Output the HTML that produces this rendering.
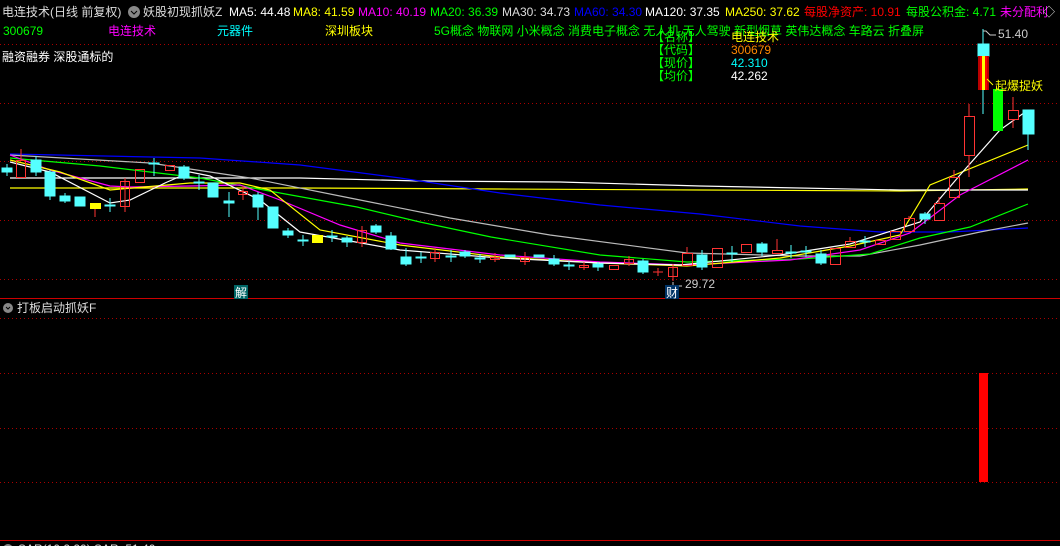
<!DOCTYPE html>
<html><head><meta charset="utf-8"><style>
html,body{margin:0;padding:0;background:#000;width:1060px;height:546px;overflow:hidden}
svg{display:block}
text{font-family:"Liberation Sans","Noto Sans CJK SC",sans-serif;font-size:12px}
</style></head><body>
<svg width="1060" height="546" viewBox="0 0 1060 546" xmlns="http://www.w3.org/2000/svg">
<rect width="1060" height="546" fill="#000"/>
<g stroke="#a00" stroke-dasharray="1,3" stroke-width="1">
<line x1="0" y1="44.5" x2="1060" y2="44.5"/><line x1="0" y1="103.5" x2="1060" y2="103.5"/>
<line x1="0" y1="161.5" x2="1060" y2="161.5"/><line x1="0" y1="220.5" x2="1060" y2="220.5"/>
<line x1="0" y1="279.5" x2="1060" y2="279.5"/>
<line x1="0" y1="318.5" x2="1060" y2="318.5"/><line x1="0" y1="373.5" x2="1060" y2="373.5"/>
<line x1="0" y1="428.5" x2="1060" y2="428.5"/><line x1="0" y1="482.5" x2="1060" y2="482.5"/>
</g>
<line x1="0" y1="298.5" x2="1060" y2="298.5" stroke="#c00"/>
<line x1="0" y1="540.5" x2="1060" y2="540.5" stroke="#c00"/>
<!-- header -->
<text x="2" y="16" fill="#ddd">电连技术(日线 前复权)</text>
<circle cx="134" cy="12" r="6" fill="#888"/><path d="M131 11l3 3 3-3" stroke="#000" fill="none"/>
<text x="143" y="16" fill="#ddd">妖股初现抓妖Z</text>
<text x="229" y="16" fill="#fff">MA5: 44.48</text>
<text x="293" y="16" fill="#ff0">MA8: 41.59</text>
<text x="358" y="16" fill="#f0f">MA10: 40.19</text>
<text x="430" y="16" fill="#0f0">MA20: 36.39</text>
<text x="502" y="16" fill="#ddd">MA30: 34.73</text>
<text x="574" y="16" fill="#00f">MA60: 34.30</text>
<text x="645" y="16" fill="#fff">MA120: 37.35</text>
<text x="725" y="16" fill="#ff0">MA250: 37.62</text>
<text x="804" y="16" fill="#f00">每股净资产: 10.91</text>
<text x="906" y="16" fill="#0f0">每股公积金: 4.71</text>
<text x="1000" y="16" fill="#f0f">未分配利</text>
<text x="1043" y="16" fill="#ddd">◇</text>
<text x="3" y="35" fill="#0f0">300679</text>
<text x="108" y="35" fill="#f0f">电连技术</text>
<text x="217" y="35" fill="#0ff">元器件</text>
<text x="325" y="35" fill="#ff0">深圳板块</text>
<text x="434" y="35" fill="#0f0">5G概念 物联网 小米概念 消费电子概念 无人机 无人驾驶 新型烟草 英伟达概念 车路云 折叠屏</text>
<text x="2" y="61" fill="#fff">融资融券 深股通标的</text>
<g fill="#0f0"><text x="652" y="41">【名称】</text><text x="652" y="54">【代码】</text><text x="652" y="67">【现价】</text><text x="652" y="80">【均价】</text></g>
<text x="731" y="41" fill="#ff0">电连技术</text>
<text x="731" y="54" fill="#f80">300679</text>
<text x="731" y="67" fill="#0ff">42.310</text>
<text x="731" y="80" fill="#fff">42.262</text>
<!-- MA lines -->
<g fill="none" stroke-width="1.2">
<polyline stroke="#ff0" points="10,188 300,188 500,189 700,190 900,191 1028,189"/>
<polyline stroke="#fff" points="10,178 300,178 420,181 560,182 700,186 900,190 1028,190"/>
<polyline stroke="#00f" points="10,154 200,158 300,165 400,178 500,193 600,205 700,214 800,226 880,232 950,232 1028,228"/>
<polyline stroke="#bbb" points="10,155 150,163 250,178 350,198 450,218 550,235 687,253 800,256 860,256 920,245 980,232 1028,223"/>
<polyline stroke="#0f0" points="10,158 100,166 200,178 280,193 357,207 420,222 491,237 600,255 687,262 800,259 870,254 920,238 970,227 1028,204"/>
<polyline stroke="#f0f" points="10,155 50,170 110,186 130,187 190,186 240,185 280,200 340,225 400,243 500,255 600,262 687,265 790,260 860,250 910,233 960,195 1028,160"/>
<polyline stroke="#ff0" points="10,160 60,172 110,190 190,183 240,183 270,190 320,230 400,245 500,257 600,263 687,266 780,258 850,246 900,235 930,185 1028,145"/>
<polyline stroke="#fff" points="10,162 50,172 110,203 130,200 165,183 190,172 210,176 260,200 300,232 400,250 500,258 600,263 680,265 780,255 850,244 920,222 960,175 1000,130 1028,110"/>
</g>
<!-- candles -->
<g id="c" stroke-width="1">
<g stroke="#5ff" fill="#5ff">
<line x1="7" y1="164" x2="7" y2="176"/><rect x="2" y="168" width="10" height="4"/>
<line x1="36" y1="156" x2="36" y2="176"/><rect x="31" y="160" width="10" height="12"/>
<line x1="50" y1="170" x2="50" y2="200"/><rect x="45" y="172" width="10" height="24"/>
<line x1="65" y1="193" x2="65" y2="203"/><rect x="60" y="196" width="10" height="5"/>
<rect x="75" y="197" width="10" height="9"/>
<line x1="110" y1="198" x2="110" y2="212"/><rect x="105" y="205" width="10" height="1"/>
<line x1="154" y1="158" x2="154" y2="176"/><rect x="149" y="163" width="10" height="1"/>
<line x1="184" y1="165" x2="184" y2="180"/><rect x="179" y="167" width="10" height="11"/>
<line x1="199" y1="175" x2="199" y2="190"/><rect x="194" y="182" width="10" height="1"/>
<rect x="208" y="183" width="10" height="14"/>
<line x1="229" y1="192" x2="229" y2="217"/><rect x="224" y="201" width="10" height="2"/>
<line x1="258" y1="192" x2="258" y2="220"/><rect x="253" y="195" width="10" height="12"/>
<rect x="268" y="207" width="10" height="21"/>
<line x1="288" y1="228" x2="288" y2="238"/><rect x="283" y="231" width="10" height="4"/>
<line x1="303" y1="235" x2="303" y2="246"/><rect x="298" y="240" width="10" height="1"/>
<line x1="332" y1="230" x2="332" y2="242"/><rect x="327" y="236" width="10" height="1"/>
<line x1="347" y1="236" x2="347" y2="247"/><rect x="342" y="238" width="10" height="4"/>
<line x1="376" y1="224" x2="376" y2="234"/><rect x="371" y="226" width="10" height="6"/>
<line x1="391" y1="232" x2="391" y2="250"/><rect x="386" y="236" width="10" height="13"/>
<line x1="406" y1="248" x2="406" y2="266"/><rect x="401" y="257" width="10" height="7"/>
<line x1="421" y1="252" x2="421" y2="263"/><rect x="416" y="257" width="10" height="1"/>
<line x1="451" y1="250" x2="451" y2="262"/><rect x="446" y="256" width="10" height="1"/>
<line x1="465" y1="250" x2="465" y2="258"/><rect x="460" y="252" width="10" height="4"/>
<line x1="480" y1="254" x2="480" y2="263"/><rect x="475" y="258" width="10" height="1"/>
<rect x="505" y="255" width="10" height="2"/>
<rect x="534" y="255" width="10" height="2"/>
<line x1="554" y1="255" x2="554" y2="266"/><rect x="549" y="259" width="10" height="5"/>
<line x1="569" y1="261" x2="569" y2="270"/><rect x="564" y="265" width="10" height="1"/>
<line x1="598" y1="262" x2="598" y2="271"/><rect x="593" y="264" width="10" height="3"/>
<line x1="643" y1="259" x2="643" y2="274"/><rect x="638" y="261" width="10" height="11"/>
<line x1="702" y1="250" x2="702" y2="270"/><rect x="697" y="255" width="10" height="12"/>
<line x1="732" y1="246" x2="732" y2="262"/><rect x="727" y="253" width="10" height="1"/>
<line x1="762" y1="242" x2="762" y2="256"/><rect x="757" y="244" width="10" height="8"/>
<line x1="791" y1="245" x2="791" y2="258"/><rect x="786" y="252" width="10" height="1"/>
<line x1="806" y1="246" x2="806" y2="257"/><rect x="801" y="251" width="10" height="1"/>
<line x1="821" y1="250" x2="821" y2="265"/><rect x="816" y="254" width="10" height="9"/>
<line x1="865" y1="236" x2="865" y2="247"/><rect x="860" y="241" width="10" height="1"/>
<rect x="920" y="214" width="10" height="5"/><line x1="925" y1="212" x2="925" y2="224"/>
<line x1="983" y1="29" x2="983" y2="114"/><rect x="978" y="44" width="11" height="12"/>
<line x1="1028" y1="110" x2="1028" y2="150"/><rect x="1023" y="110" width="11" height="24"/>
</g>
<g stroke="#f33" fill="none">
<line x1="21" y1="149" x2="21" y2="160"/><rect x="16.5" y="160.5" width="9" height="17"/>
<line x1="125" y1="178" x2="125" y2="212"/><rect x="120.5" y="181.5" width="9" height="25"/>
<rect x="135.5" y="169.5" width="9" height="13"/>
<rect x="165.5" y="165.5" width="9" height="5"/>
<line x1="243" y1="186" x2="243" y2="200"/><rect x="238.5" y="191.5" width="9" height="3"/>
<line x1="362" y1="226" x2="362" y2="247"/><rect x="357.5" y="230.5" width="9" height="12"/>
<line x1="435" y1="248" x2="435" y2="262"/><rect x="430.5" y="252.5" width="9" height="6"/>
<line x1="495" y1="253" x2="495" y2="262"/><rect x="490.5" y="257.5" width="9" height="2"/>
<line x1="525" y1="252" x2="525" y2="265"/><rect x="520.5" y="257.5" width="9" height="4"/>
<line x1="584" y1="262" x2="584" y2="270"/><rect x="579.5" y="265.5" width="9" height="2"/>
<rect x="609.5" y="265.5" width="9" height="4"/>
<line x1="629" y1="256" x2="629" y2="266"/><rect x="624.5" y="259.5" width="9" height="4"/>
<line x1="658" y1="268" x2="658" y2="276"/><line x1="653" y1="272" x2="663" y2="272"/>
<line x1="673" y1="264" x2="673" y2="281"/><rect x="668.5" y="267.5" width="9" height="9"/>
<line x1="687" y1="247" x2="687" y2="253"/><rect x="682.5" y="253.5" width="10" height="12"/>
<rect x="712.5" y="248.5" width="10" height="19"/>
<rect x="741.5" y="244.5" width="10" height="8"/>
<line x1="777" y1="239" x2="777" y2="250"/><rect x="772.5" y="250.5" width="10" height="3"/>
<rect x="830.5" y="248.5" width="10" height="16"/>
<line x1="850" y1="237" x2="850" y2="241"/><rect x="845.5" y="241.5" width="10" height="6"/>
<rect x="875.5" y="240.5" width="10" height="4"/>
<rect x="890.5" y="231.5" width="10" height="8"/>
<line x1="909" y1="216" x2="909" y2="218"/><rect x="904.5" y="218.5" width="10" height="13"/>
<line x1="939" y1="197" x2="939" y2="203"/><rect x="934.5" y="203.5" width="10" height="17"/>
<line x1="954" y1="170" x2="954" y2="177"/><rect x="949.5" y="177.5" width="10" height="20"/>
<line x1="969" y1="155" x2="969" y2="177"/><line x1="969" y1="104" x2="969" y2="116"/><rect x="964.5" y="116.5" width="10" height="39"/>
<line x1="1013" y1="97" x2="1013" y2="128"/><rect x="1008.5" y="110.5" width="10" height="9" fill="#000"/>
</g>
<rect x="90" y="203" width="11" height="6" fill="#ff0"/><line x1="95" y1="209" x2="95" y2="217" stroke="#f33"/>
<rect x="312" y="235" width="11" height="8" fill="#ff0"/>
<rect x="978" y="56" width="11" height="34" fill="#b00"/><rect x="980" y="56" width="7" height="34" fill="#f00"/><rect x="982" y="56" width="3" height="34" fill="#ff0"/>
<rect x="993" y="89" width="10" height="42" fill="#0f0"/>
</g>
<text x="998" y="38" fill="#ccc">51.40</text>
<path d="M983 31h3l4 4h6" stroke="#ccc" fill="none"/>
<text x="995" y="90" fill="#ff0">起爆捉妖</text>
<path d="M993 85l-6-6" stroke="#ff0"/>
<text x="685" y="288" fill="#ccc">29.72</text>
<path d="M673 282v4h9" stroke="#ccc" fill="none"/>
<rect x="234" y="285" width="14" height="14" fill="#066"/><text x="235" y="297" fill="#fff">解</text>
<rect x="665" y="285" width="14" height="14" fill="#036"/><text x="666" y="297" fill="#fff">财</text>
<!-- lower panel -->
<circle cx="8" cy="308" r="5" fill="#888"/><path d="M6 307l2 2 2-2" stroke="#000" fill="none"/>
<text x="17" y="312" fill="#ddd">打板启动抓妖F</text>
<rect x="979" y="373" width="9" height="109" fill="#f00"/>
<circle cx="8" cy="549" r="5" fill="#888"/>
<text x="18" y="553" fill="#ddd">SAR(10,2,20) SAR: 51.40</text>
</svg>
</body></html>
